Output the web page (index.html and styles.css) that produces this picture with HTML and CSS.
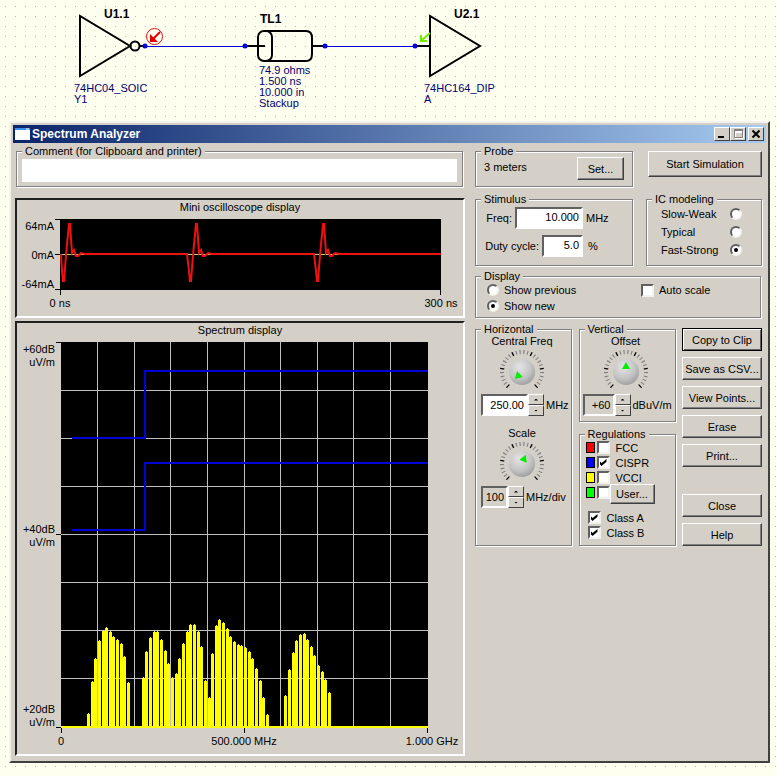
FILE: index.html
```html
<!DOCTYPE html>
<html lang="en">
<head>
<meta charset="utf-8">
<title>Spectrum Analyzer</title>
<link rel="stylesheet" href="styles.css">
</head>
<body>
<svg class="schematic" viewBox="0 0 777 121" role="img" aria-label="Net schematic">
  <g class="wire">
    <path d="M145 46.500H246M325 46.500H416"/>
  </g>
  <g class="part">
    <path d="M80 16V76L130 46Z"/>
    <circle cx="135" cy="46" r="4.5"/>
    <path d="M139 46H144M246 46H265M312 46H325M416 46H430"/>
    <path d="M265 31H306Q312 31 312 38V54Q312 61 306 61H265"/>
    <rect x="258" y="31" width="14" height="30" rx="6"/>
    <path d="M430 16V76L480 46Z"/>
  </g>
  <g class="node">
    <circle cx="145" cy="46" r="2.5"/><circle cx="245" cy="46" r="2.5"/>
    <circle cx="325" cy="46" r="2.5"/><circle cx="415" cy="46" r="2.5"/>
  </g>
  <g class="probe-red">
    <circle cx="154.500" cy="36.500" r="8"/>
    <path class="arrow" d="M160 32L152 40"/>
    <path class="head" d="M150 34V42H158Z"/>
  </g>
  <path class="probe-green" d="M430 33L422 40M421 35V41H427"/>
  <g class="ref">
    <text x="104" y="18">U1.1</text><text x="260" y="23">TL1</text><text x="454" y="18">U2.1</text>
  </g>
  <g class="value">
    <text x="74" y="92">74HC04_SOIC</text><text x="74" y="103">Y1</text>
    <text x="259" y="74">74.9 ohms</text><text x="259" y="85">1.500 ns</text>
    <text x="259" y="96">10.000 in</text><text x="259" y="107">Stackup</text>
    <text x="424" y="92">74HC164_DIP</text><text x="424" y="103">A</text>
  </g>
</svg>

<svg class="defs" aria-hidden="true">
  <defs>
    <radialGradient id="ball" cx="0.4" cy="0.3" r="0.75">
      <stop offset="0" stop-color="#e4e4e4"/><stop offset="0.6" stop-color="#c4c4c4"/><stop offset="1" stop-color="#9c9c9c"/>
    </radialGradient>
    <g id="dial">
      <path class="tick" d="M-13.700 14.500A20 20 0 1 1 13.700 14.500" pathLength="253" stroke-dasharray="3 7"/>
      <path class="tick major" d="M-13.700 14.500A20 20 0 1 1 13.700 14.500" pathLength="253" stroke-dasharray="3 47"/>
      <circle r="13" fill="url(#ball)"/>
    </g>
  </defs>
</svg>

<main class="window">
  <header class="titlebar">
    <svg class="app-icon" viewBox="0 0 15 12" aria-hidden="true"><path d="M0 0H15V12H0Z" fill="#fff"/><path d="M0 0H15V2H0Z" fill="#3a8ee8"/><path d="M11 1h3" stroke="#fff"/></svg>
    <h1>Spectrum Analyzer</h1>
    <button class="tb" aria-label="Minimize"><svg viewBox="0 0 14 12"><path d="M3 9H9" stroke="#000" stroke-width="2"/></svg></button>
    <button class="tb" aria-label="Maximize"><svg viewBox="0 0 14 12"><path d="M3.500 2.500H11.500V9.500H3.500ZM3 3.500H12" fill="none" stroke="#fff" transform="translate(1 1)"/><path d="M3.500 1.500H11.500V9.500H3.500ZM3 2.500H12" fill="none" stroke="#808080"/></svg></button>
    <button class="tb close" aria-label="Close window"><svg viewBox="0 0 14 12"><path d="M3.500 2.500L10.500 9.500M10.500 2.500L3.500 9.500" stroke="#000" stroke-width="2"/></svg></button>
  </header>

  <div class="content">
    <div class="left">
      <fieldset class="comment">
        <legend><label for="comment">Comment (for Clipboard and printer)</label></legend>
        <input id="comment" type="text">
      </fieldset>

      <section class="panel">
        <h2>Mini oscilloscope display</h2>
        <svg viewBox="17 214 446 102" role="img" aria-label="Probe current against time">
          <rect x="61" y="219" width="380" height="71"/>
          <path class="axis" d="M55 219.500H61M55 254.500H61M55 289.500H61M60.500 219V295M440.500 290V295"/>
          <path class="zero" d="M61 254.500H441"/>
          <path class="wave" d="M61 254L62 271L63 281H64L66 255L69 224H70L72 253L74 250L76 256H78L81 253L85 254H187L189 271L190 281H191L193 255L196 224H197L199 253L201 250L203 256H205L208 253L212 254H314L316 271L317 281H318L320 255L323 224H324L326 253L328 250L330 256H332L335 253L339 254H441"/>
          <g class="end"><text x="54" y="230">64mA</text><text x="54" y="259">0mA</text><text x="54" y="288">-64mA</text></g>
          <g class="mid"><text x="60" y="307">0 ns</text><text x="441" y="307">300 ns</text></g>
        </svg>
      </section>

      <section class="panel">
        <h2>Spectrum display</h2>
        <svg viewBox="17 337 446 417" role="img" aria-label="Radiated field against frequency">
          <rect x="61" y="342" width="367" height="386"/>
          <path class="grid" d="M97.500 342V728M134.500 342V728M170.500 342V728M207.500 342V728M244.500 342V728M280.500 342V728M317.500 342V728M353.500 342V728M390.500 342V728M61 390.500H428M61 438.500H428M61 486.500H428M61 534.500H428M61 582.500H428M61 630.500H428M61 678.500H428"/>
          <path class="limit" d="M72 438H145V371H428M72 530H145V463H428"/>
          <path class="bars" id="bars"/>
          <path class="base" d="M61 727H428"/>
          <path class="axis" d="M56 342.500H61M56 534.500H61M56 727.500H61M61.500 728V733M244.500 728V733M427.500 728V733"/>
          <g class="end">
            <text x="55" y="353">+60dB</text><text x="55" y="366">uV/m</text>
            <text x="55" y="533">+40dB</text><text x="55" y="546">uV/m</text>
            <text x="55" y="713">+20dB</text><text x="55" y="726">uV/m</text>
          </g>
          <g class="mid"><text x="61" y="745">0</text><text x="244" y="745">500.000 MHz</text><text x="432" y="745">1.000 GHz</text></g>
        </svg>
      </section>
    </div>

    <div class="right">
      <div class="row top">
        <fieldset class="probe"><legend>Probe</legend><span>3 meters</span><button class="btn">Set...</button></fieldset>
        <button class="btn start">Start Simulation</button>
      </div>

      <div class="row">
        <fieldset class="stimulus">
          <legend>Stimulus</legend>
          <div class="field"><label for="freq">Freq:</label><input id="freq" class="num freq" value="10.000"><span class="unit">MHz</span></div>
          <div class="field"><label for="duty">Duty cycle:</label><input id="duty" class="num duty" value="5.0"><span class="unit percent">%</span></div>
        </fieldset>
        <fieldset class="modeling">
          <legend>IC modeling</legend>
          <label>Slow-Weak<input type="radio" name="ic"></label>
          <label>Typical<input type="radio" name="ic"></label>
          <label>Fast-Strong<input type="radio" name="ic" checked></label>
        </fieldset>
      </div>

      <fieldset class="display">
        <legend>Display</legend>
        <div class="choices">
          <label><input type="radio" name="show">Show previous</label>
          <label><input type="radio" name="show" checked>Show new</label>
        </div>
        <label class="auto"><input type="checkbox">Auto scale</label>
      </fieldset>

      <div class="row bottom">
        <fieldset class="horizontal">
          <legend>Horizontal</legend>
          <label class="caption" for="central">Central Freq</label>
          <svg class="knob" viewBox="-24 -24 48 48" aria-hidden="true"><use href="#dial"/><path class="pointer" transform="rotate(-135)" d="M0 -10L4 -3H-4Z"/></svg>
          <div class="spin"><input id="central" class="num wide" value="250.00"><span class="arrows"><button aria-label="Raise central frequency"></button><button class="down" aria-label="Lower central frequency"></button></span><span>MHz</span></div>
          <label class="caption scale" for="scale">Scale</label>
          <svg class="knob" viewBox="-24 -24 48 48" aria-hidden="true"><use href="#dial"/><path class="pointer" transform="rotate(22)" d="M0 -10L4 -3H-4Z"/></svg>
          <div class="spin"><input id="scale" class="num gray" value="100" readonly><span class="arrows"><button aria-label="Raise scale"></button><button class="down" aria-label="Lower scale"></button></span><span>MHz/div</span></div>
        </fieldset>

        <div class="middle">
          <fieldset class="vertical">
            <legend>Vertical</legend>
            <label class="caption" for="offset">Offset</label>
            <svg class="knob" viewBox="-24 -24 48 48" aria-hidden="true"><use href="#dial"/><path class="pointer" d="M0 -10L4 -3H-4Z"/></svg>
            <div class="spin"><input id="offset" class="num gray off" value="+60" readonly><span class="arrows"><button aria-label="Raise offset"></button><button class="down" aria-label="Lower offset"></button></span><span>dBuV/m</span></div>
          </fieldset>
          <fieldset class="regulations">
            <legend>Regulations</legend>
            <label><i class="swatch red"></i><input type="checkbox"><span>FCC</span></label>
            <label><i class="swatch blue"></i><input type="checkbox" checked><span>CISPR</span></label>
            <label><i class="swatch yellow"></i><input type="checkbox"><span>VCCI</span></label>
            <div class="user"><i class="swatch green"></i><input type="checkbox" aria-label="User limits"><button class="btn">User...</button></div>
            <label class="class"><input type="checkbox" checked><span>Class A</span></label>
            <label class="class"><input type="checkbox" checked><span>Class B</span></label>
          </fieldset>
        </div>

        <div class="actions">
          <button class="btn default">Copy to Clip</button>
          <button class="btn">Save as CSV...</button>
          <button class="btn">View Points...</button>
          <button class="btn">Erase</button>
          <button class="btn">Print...</button>
          <button class="btn apart">Close</button>
          <button class="btn">Help</button>
        </div>
      </div>
    </div>
  </div>
</main>
<script src="chart.js"></script>
</body>
</html>
```
FILE: styles.css
```css
* { box-sizing: border-box; }

body {
  margin: 0;
  min-height: 100vh;
  color: #000;
  font: 11px/12px "Liberation Sans", Arial, sans-serif;
  background: conic-gradient(at 1px 1px, #fffff0 75%, #b8b8a8 0) 5px 6px / 10px 10px;
}

input, button { font: inherit; color: inherit; margin: 0; }
svg { display: block; }
.defs { position: absolute; width: 0; height: 0; }

/* Schematic */
.schematic { width: 100%; }
.wire { stroke: #0000e0; stroke-width: 1; }
.part { fill: none; stroke: #000; stroke-width: 2; }
.node { fill: #0000e0; }
.probe-red { fill: none; stroke: #d81010; }
.arrow { stroke: #e00000; stroke-width: 2; }
.head { fill: #e00000; stroke: none; }
.probe-green { fill: none; stroke: #70f000; stroke-width: 2; }
.ref { font-weight: bold; font-size: 12px; }
.value { fill: #000070; }

/* Window frame */
.window {
  margin: 0 7px 0 9px;
  padding: 2px;
  background: #d4d0c8;
  border: 2px solid;
  border-color: #f4f2ec #404040 #404040 #f4f2ec;
}
.titlebar {
  display: flex;
  align-items: center;
  height: 18px;
  padding: 0 2px;
  background: linear-gradient(90deg, #0a246a, #a6caf0);
  color: #fff;
}
.app-icon { width: 15px; height: 12px; }
h1 { flex: 1; margin: 0 0 0 2px; font: bold 12px/16px "Liberation Sans", Arial, sans-serif; }
h2 { margin: 0; font: inherit; line-height: 14px; text-align: center; }
.tb {
  width: 16px;
  height: 14px;
  padding: 0;
  background: #d4d0c8;
  border: 1px solid;
  border-color: #fff #404040 #404040 #fff;
}
.tb.close { margin-left: 2px; }
.tb svg { width: 14px; height: 12px; }

.content {
  display: grid;
  grid-template-columns: minmax(0, 1fr) 287px;
  gap: 10px;
  padding: 2px 4px 3px 2px;
}

/* Etched group box: gray line with a white highlight below and to the right */
fieldset {
  min-width: 0;
  margin: 0;
  padding: 0 5px;
  border: 1px solid #808080;
  box-shadow: inset 1px 1px #fff, 1px 1px #fff;
}
legend { padding: 0 3px; background: #d4d0c8; }

.comment { height: 42px; margin: 0 2px 11px 1px; }
.comment input { display: block; width: 100%; height: 23px; margin-top: 2px; border: 0; background: #fff; }

.panel {
  margin-bottom: 3px;
  border: 2px solid;
  border-color: #202020 #fff #fff #202020;
}
.panel:last-child { margin-bottom: 0; }
.panel svg { width: 100%; }
.axis { stroke: #000; }
.grid { stroke: #c0c0c0; }
.zero { stroke: #c8c890; }
.wave { fill: none; stroke: #f01010; stroke-width: 2; }
.limit { fill: none; stroke: #0000d8; stroke-width: 2; }
.bars { fill: #ff0; shape-rendering: crispEdges; }
.base { stroke: #ff0; stroke-width: 2; }
.end { text-anchor: end; }
.mid { text-anchor: middle; }

/* Buttons and form controls */
.btn {
  padding: 0;
  background: #d4d0c8;
  border: 1px solid;
  border-color: #fff #404040 #404040 #fff;
  box-shadow: inset -1px -1px #808080;
}
.num {
  padding: 0 3px;
  text-align: right;
  background: #fff;
  border: 2px solid;
  border-color: #606060 #fff #fff #606060;
}
.gray { background: #d4d0c8; }

input[type="radio"], input[type="checkbox"] {
  appearance: none;
  flex: none;
  display: grid;
  place-items: center;
  background: #fff;
}
input[type="radio"] {
  width: 12px;
  height: 12px;
  border: 2px solid;
  border-color: #606060 #f4f2ec #f4f2ec #606060;
  border-radius: 50%;
}
input[type="radio"]:checked::before {
  content: "";
  width: 4px;
  height: 4px;
  border-radius: 50%;
  background: #000;
}
input[type="checkbox"] {
  width: 13px;
  height: 13px;
  border: 2px solid;
  border-color: #606060 #f4f2ec #f4f2ec #606060;
}
input[type="checkbox"]:checked::before {
  content: "";
  width: 7px;
  height: 7px;
  background: #000;
  clip-path: polygon(0 28%, 30% 58%, 100% 0, 100% 40%, 30% 100%, 0 70%);
}

/* Right-hand controls */
.right { min-width: 0; }
.row { display: flex; justify-content: space-between; align-items: flex-start; }
.top { height: 48px; }
.probe { width: 158px; height: 42px; padding: 0 8px 0 5px; }
.probe .btn { float: right; width: 47px; height: 23px; }
.probe span { display: inline-block; padding: 4px 0 0 3px; }
.start { width: 114px; height: 26px; margin-top: 6px; }

.stimulus { width: 158px; height: 73px; }
.field { display: flex; align-items: center; justify-content: flex-end; height: 22px; margin-top: 6px; }
.field:first-of-type { margin-top: 2px; }
.field label { margin-right: 3px; }
.field input { height: 22px; padding: 0 2px 3px; }
.freq { width: 68px; }
.duty { width: 41px; }
.unit { width: 44px; padding-left: 3px; }
.percent { padding-left: 5px; }

.modeling { width: 116px; height: 73px; }
.modeling label {
  display: flex;
  align-items: center;
  justify-content: space-between;
  height: 18px;
  padding: 0 14px 0 9px;
}

.display { display: flow-root; height: 48px; margin: 4px 1px 0 0; padding: 0 11px; }
.display legend { margin-left: -6px; }
.choices { float: left; }
.display label { display: flex; align-items: center; gap: 5px; height: 16px; }
.display .auto { float: right; width: 108px; }

.bottom { margin-top: 5px; }
.horizontal { width: 97px; height: 223px; }
.middle { width: 97px; }
.vertical { height: 99px; }
.regulations { height: 118px; margin-top: 6px; }
.caption { display: block; padding-right: 3px; text-align: center; }
.caption.scale { margin-top: 11px; }
.knob { width: 48px; height: 48px; margin: 1px auto -2px 17px; }
.spin { display: flex; align-items: center; height: 22px; }
.spin .num { height: 22px; width: 27px; padding: 0 2px; }
.spin .wide { width: 47px; }
.spin .off { width: 32px; margin-left: -2px; }
.arrows { display: grid; flex: none; width: 16px; height: 22px; margin-right: 2px; }
.arrows button {
  display: grid;
  place-items: center;
  padding: 0;
  background: #d4d0c8;
  border: 1px solid;
  border-color: #fff #404040 #404040 #fff;
}
.arrows button::before {
  content: "";
  width: 4px;
  height: 2px;
  background: #000;
  clip-path: polygon(50% 0, 100% 100%, 0 100%);
}
.arrows .down::before { clip-path: polygon(0 0, 100% 0, 50% 100%); }

.tick { fill: none; stroke: #808080; stroke-width: 4; }
.major { stroke: #000; stroke-width: 4; }
.pointer { fill: #0e0; }

.regulations label, .user { display: flex; align-items: center; height: 15px; padding-left: 1px; }
.regulations label span { margin-left: 6px; }
.swatch { flex: none; width: 9px; height: 11px; margin-right: 2px; border: 1px solid #000; }
.red { background: #f00; }
.blue { background: #00f; }
.yellow { background: #ff0; }
.green { background: #0f0; }
.user .btn { width: 45px; height: 20px; flex: none; margin-top: 3px; }
.regulations .class { padding-left: 3px; }
.user + .class { margin-top: 10px; }

.actions { display: grid; gap: 6px; width: 80px; padding-top: 5px; }
.actions .btn { height: 23px; }
.actions .default { border-color: #000; box-shadow: inset 1px 1px #fff, inset -1px -1px #606060; }
.actions .apart { margin-top: 21px; }
```
FILE: chart.js
```js
// Harmonics of the 10 MHz stimulus: first harmonic number, then the top of each bar.
const groups = [
  [7, [713, 681, 658, 640, 630, 627, 631, 636, 639, 643, 656, 682]],
  [22, [677, 651, 637, 631, 631, 639, 650, 663, 677, 673, 658, 643, 631, 624, 624, 631, 646, 680, 697, 653, 625, 619, 622, 628]],
  [46, [636, 641, 644, 645, 647, 651, 658, 668, 680, 697, 714]],
  [61, [695, 669, 652, 640, 634, 633, 639, 646, 655, 665, 671, 679, 692]]
];

let path = "";
for (const [first, tops] of groups) {
  tops.forEach((top, i) => {
    const x = Math.round(61.3 + 3.655 * (first + i));
    path += `M${x} 727V${top + 1}H${x + 1}V${top}H${x + 2}V${top + 1}H${x + 3}V727Z`;
  });
}
document.getElementById("bars").setAttribute("d", path);
```
